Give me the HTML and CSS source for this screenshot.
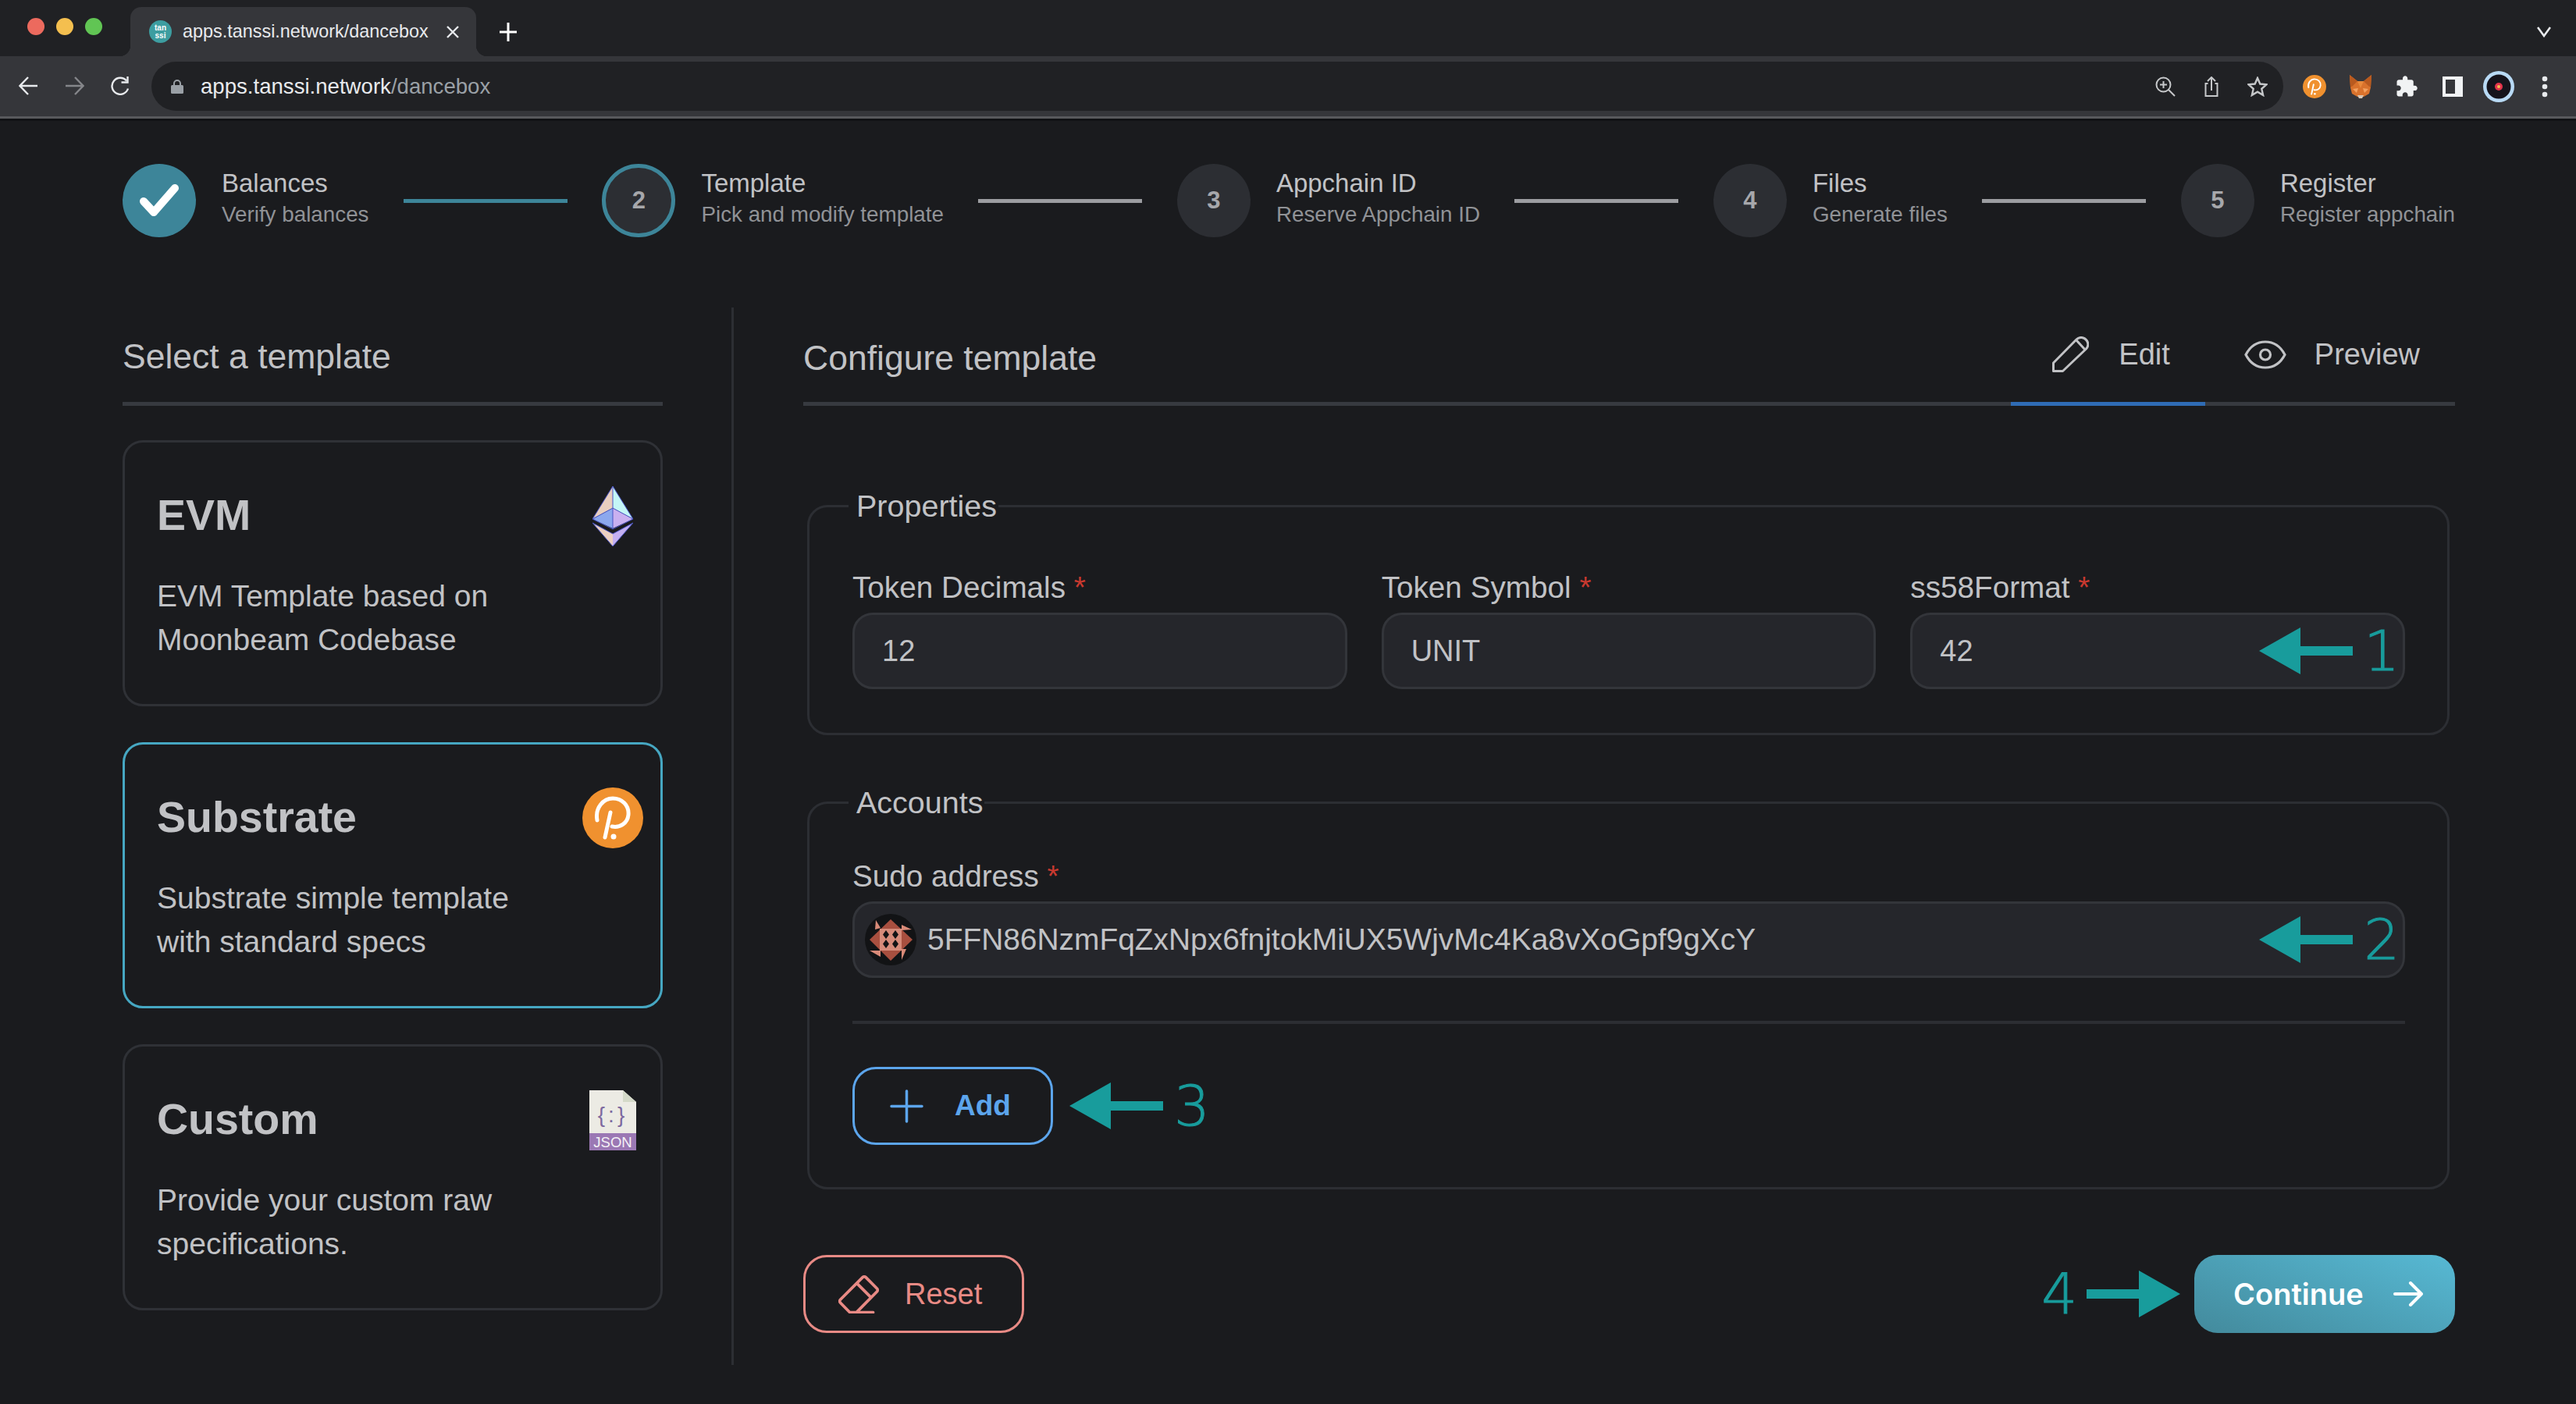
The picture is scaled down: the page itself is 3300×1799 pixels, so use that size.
FILE: index.html
```html
<!DOCTYPE html>
<html lang="en">
<head>
    <meta charset="UTF-8">
    <title>apps.tanssi.network/dancebox</title>
    <link rel="stylesheet" href="styles.css">
</head>
<body>

<svg class="defs" width="0" height="0">
    <symbol id="polkadot" viewBox="0 0 78 78">
        <circle cx="39" cy="39" r="39" fill="#f0912f"/>
        <path d="M19 42C16 26 27 14 39 14C51 14 60 23 59 35C58 46 48 52 38 50M36 32L29 64" fill="none" stroke="#fff" stroke-width="5" stroke-linecap="round"/>
        <circle cx="40" cy="63" r="3.5" fill="#fff"/>
    </symbol>
    <symbol id="arrow-left" viewBox="0 0 120 60">
        <polygon points="0,30 53,0 53,24 120,24 120,36 53,36 53,60" fill="#189c9c"/>
    </symbol>
    <symbol id="arrow-right" viewBox="0 0 120 60">
        <polygon points="120,30 67,0 67,24 0,24 0,36 67,36 67,60" fill="#189c9c"/>
    </symbol>
</svg>

<div class="tabstrip">
    <div class="lights">
        <span class="light red"></span>
        <span class="light yellow"></span>
        <span class="light green"></span>
    </div>
    <div class="tab">
        <svg class="favicon" viewBox="0 0 29 29">
            <circle cx="14.5" cy="14.5" r="14.5" fill="#3d9da0"/>
            <text x="14.5" y="13" text-anchor="middle" font-size="10" font-weight="700" fill="#fff">tan</text>
            <text x="14.5" y="23" text-anchor="middle" font-size="10" font-weight="700" fill="#fff">ssi</text>
        </svg>
        <span class="tab-title">apps.tanssi.network/dancebox</span>
        <svg class="tab-close" viewBox="0 0 16 16"><path d="M1 1L15 15M15 1L1 15" stroke="#e8eaed" stroke-width="2.4"/></svg>
    </div>
    <svg class="tab-new" viewBox="0 0 22 24"><path d="M11 0V24M0 12H22" stroke="#fff" stroke-width="3"/></svg>
    <svg class="tab-list" viewBox="0 0 18 14"><path d="M1 1L9 12L17 1" fill="none" stroke="#e8eaed" stroke-width="2.6"/></svg>
</div>

<div class="toolbar">
    <svg class="nav-icon" viewBox="0 0 25 24"><path d="M24 12H2M12 1L1.5 12L12 23" fill="none" stroke="#e8eaed" stroke-width="2.4"/></svg>
    <svg class="nav-icon dim" viewBox="0 0 25 24"><path d="M1 12H23M13 1L23.5 12L13 23" fill="none" stroke="#85868a" stroke-width="2.4"/></svg>
    <svg class="nav-icon" viewBox="0 0 25 24"><path d="M22 15.5A10.5 10.5 0 1 1 20 5.5M21.5 0V7.5H13.5" fill="none" stroke="#e8eaed" stroke-width="2.4"/></svg>
    <div class="omnibox">
        <svg class="lock" viewBox="0 0 16 18"><path d="M4 8V5a4 4 0 0 1 8 0V8" fill="none" stroke="#9aa0a6" stroke-width="2"/><rect y="7" width="16" height="11" rx="1.5" fill="#9aa0a6"/></svg>
        <span class="url">apps.tanssi.network<span class="url-path">/dancebox</span></span>
        <span class="omni-actions">
            <svg class="omni-icon" viewBox="0 0 26 26"><circle cx="10.5" cy="10.5" r="9" fill="none" stroke="#c6c8ca" stroke-width="2"/><path d="M17 17L25 25M10.5 6V15M6 10.5H15" fill="none" stroke="#c6c8ca" stroke-width="2"/></svg>
            <svg class="omni-icon" viewBox="0 0 26 26"><path d="M8.5 9H5.5V25H20.5V9H17.500M13 18V1M8 6L13 1L18 6" fill="none" stroke="#c6c8ca" stroke-width="2"/></svg>
            <svg class="omni-icon" viewBox="0 0 26 26"><polygon points="13,2 16.300,9.500 24.500,10.300 18.300,15.800 20.100,23.900 13,19.700 5.900,23.900 7.700,15.800 1.500,10.300 9.700,9.500" fill="none" stroke="#c6c8ca" stroke-width="2.400"/></svg>
        </span>
    </div>
    <div class="extensions">
        <svg class="ext"><use href="#polkadot"/></svg>
        <svg class="ext" viewBox="0 0 30 30">
            <polygon points="1,0 11,8 19,8 29,0 28,16 26,24 19,28 11,28 4,24 2,16" fill="#d9722c"/>
            <polygon points="1,0 11,8 5,14 2,16" fill="#b95a1f"/>
            <polygon points="29,0 19,8 25,14 28,16" fill="#b95a1f"/>
            <polygon points="11,8 19,8 15,17" fill="#e88a3c"/>
            <polygon points="5,18 12,17 10,23" fill="#f4a261"/>
            <polygon points="25,18 18,17 20,23" fill="#f4a261"/>
            <polygon points="11,26 19,26 17,30 13,30" fill="#d8c7b5"/>
        </svg>
        <svg class="ext" viewBox="0 0 24 24"><path d="M20.500 11H19V7c0-1.100-.9-2-2-2h-4V3.500C13 2.120 11.880 1 10.500 1S8 2.120 8 3.500V5H4c-1.100 0-1.990.9-1.990 2v3.800H3.500c1.490 0 2.700 1.210 2.700 2.700s-1.210 2.700-2.700 2.700H2V20c0 1.100.9 2 2 2h3.800v-1.500c0-1.490 1.210-2.700 2.700-2.700 1.490 0 2.700 1.210 2.700 2.700V22H17c1.100 0 2-.9 2-2v-4h1.500c1.380 0 2.500-1.120 2.500-2.500S21.880 11 20.500 11z" fill="#f1f3f4"/></svg>
        <svg class="ext" viewBox="0 0 30 30"><rect x="2" y="2" width="26" height="26" fill="#f1f3f4"/><rect x="6" y="6" width="12" height="18" fill="#35363a"/></svg>
        <svg class="ext avatar" viewBox="0 0 40 40">
            <circle cx="20" cy="20" r="20" fill="#b8daf5"/>
            <circle cx="20" cy="20" r="15.500" fill="#15141c"/>
            <circle cx="20" cy="20" r="5" fill="#e2344d"/>
            <circle cx="20" cy="20" r="2" fill="#f2c14e"/>
        </svg>
        <svg class="ext" viewBox="0 0 30 30"><circle cx="15" cy="5" r="3.300" fill="#e8eaed"/><circle cx="15" cy="15" r="3.300" fill="#e8eaed"/><circle cx="15" cy="25" r="3.300" fill="#e8eaed"/></svg>
    </div>
</div>

<div class="page">
    <div class="stepper">
        <div class="step">
            <div class="step-circle done">
                <svg class="check" viewBox="0 0 50 44"><path d="M5 23L18 37L45 6" fill="none" stroke="#fff" stroke-width="10" stroke-linejoin="round" stroke-linecap="round"/></svg>
            </div>
            <div class="step-text">
                <div class="step-title">Balances</div>
                <div class="step-sub">Verify balances</div>
            </div>
        </div>
        <div class="step-line active"></div>
        <div class="step">
            <div class="step-circle current">2</div>
            <div class="step-text">
                <div class="step-title">Template</div>
                <div class="step-sub">Pick and modify template</div>
            </div>
        </div>
        <div class="step-line"></div>
        <div class="step">
            <div class="step-circle">3</div>
            <div class="step-text">
                <div class="step-title">Appchain ID</div>
                <div class="step-sub">Reserve Appchain ID</div>
            </div>
        </div>
        <div class="step-line"></div>
        <div class="step">
            <div class="step-circle">4</div>
            <div class="step-text">
                <div class="step-title">Files</div>
                <div class="step-sub">Generate files</div>
            </div>
        </div>
        <div class="step-line"></div>
        <div class="step">
            <div class="step-circle">5</div>
            <div class="step-text">
                <div class="step-title">Register</div>
                <div class="step-sub">Register appchain</div>
            </div>
        </div>
    </div>

    <div class="main">
        <div class="left-col">
            <div class="col-head">Select a template</div>

            <div class="card">
                <div class="card-top">
                    <div class="card-title">EVM</div>
                    <div class="card-logo">
                        <svg class="eth" viewBox="0 0 52 77">
                            <polygon points="26,0 0,42 26,28" fill="#e9cfc0"/>
                            <polygon points="26,0 52,42 26,28" fill="#c4f6f6"/>
                            <polygon points="0,42 26,28 26,54" fill="#8ca8ee"/>
                            <polygon points="52,42 26,28 26,54" fill="#c9b0f0"/>
                            <polygon points="0,47 26,61 26,77" fill="#ecd0c2"/>
                            <polygon points="52,47 26,61 26,77" fill="#c4b0f2"/>
                            <path d="M26 0L0 42L26 55L52 42ZM0 42L26 28L52 42M26 0V55M0 47L26 77L52 47L26 61Z" fill="none" stroke="#4a55c4" stroke-width="1"/>
                        </svg>
                    </div>
                </div>
                <div class="card-desc">EVM Template based on<br>Moonbeam Codebase</div>
            </div>

            <div class="card selected">
                <div class="card-top">
                    <div class="card-title">Substrate</div>
                    <div class="card-logo"><svg class="dot-logo"><use href="#polkadot"/></svg></div>
                </div>
                <div class="card-desc">Substrate simple template<br>with standard specs</div>
            </div>

            <div class="card">
                <div class="card-top">
                    <div class="card-title">Custom</div>
                    <div class="card-logo">
                        <svg class="json" viewBox="0 0 60 77">
                            <polygon points="0,0 43,0 60,15 60,55 0,55" fill="#ecebe4"/>
                            <polygon points="43,0 60,15 43,15" fill="#d4d9c8"/>
                            <rect y="55" width="60" height="22" fill="#9b78b4"/>
                            <text x="30" y="41" text-anchor="middle" font-size="28" letter-spacing="4" fill="#7d69a0">{:}</text>
                            <text x="30" y="73" text-anchor="middle" font-size="18.500" fill="#f4f1f6">JSON</text>
                        </svg>
                    </div>
                </div>
                <div class="card-desc">Provide your custom raw<br>specifications.</div>
            </div>
        </div>

        <div class="col-divider"></div>

        <div class="right-col">
            <div class="col-head config-head">
                <span>Configure template</span>
                <div class="tabs">
                    <div class="config-tab active">
                        <svg class="edit-icon" viewBox="0 0 47 46"><path d="M1.500 44.500V34L31 4C35 0 41 1 44 5C47 9 46 13 43.500 16L13.500 44.500ZM31 5L42 17" fill="none" stroke="#c1c2c5" stroke-width="3" stroke-linejoin="round"/></svg>
                        Edit
                    </div>
                    <div class="config-tab">
                        <svg class="eye-icon" viewBox="0 0 54 37"><path d="M2 18.500C8 7 17 2 27 2C37 2 46 7 52 18.500C46 30 37 35 27 35C17 35 8 30 2 18.500Z" fill="none" stroke="#c1c2c5" stroke-width="3.200"/><circle cx="27" cy="18.500" r="6.500" fill="none" stroke="#c1c2c5" stroke-width="3.200"/></svg>
                        Preview
                    </div>
                </div>
            </div>

            <fieldset class="props">
                <legend>Properties</legend>
                <div class="props-grid">
                    <div>
                        <div class="field-label">Token Decimals <span class="req">*</span></div>
                        <div class="field-input">12</div>
                    </div>
                    <div>
                        <div class="field-label">Token Symbol <span class="req">*</span></div>
                        <div class="field-input">UNIT</div>
                    </div>
                    <div>
                        <div class="field-label">ss58Format <span class="req">*</span></div>
                        <div class="field-input">
                            42
                            <span class="note in-field">
                                <svg class="note-arrow"><use href="#arrow-left"/></svg>
                                <span class="note-num">1</span>
                            </span>
                        </div>
                    </div>
                </div>
            </fieldset>

            <fieldset class="accounts">
                <legend>Accounts</legend>
                <div class="field-label">Sudo address <span class="req">*</span></div>
                <div class="field-input address">
                    <svg class="identicon" viewBox="0 0 66 66">
                        <circle cx="33" cy="33" r="33" fill="#121315"/>
                        <polygon points="33,7 61,33 33,60 6,33" fill="#a84f3f"/>
                        <rect x="19" y="19" width="28" height="28" fill="#d68b7a"/>
                        <polygon points="27,21 31,26.500 27,32 23,26.500" fill="#121315"/>
                        <polygon points="39,21 43,26.500 39,32 35,26.500" fill="#121315"/>
                        <polygon points="27,33 31,38.500 27,44 23,38.500" fill="#121315"/>
                        <polygon points="39,33 43,38.500 39,44 35,38.500" fill="#121315"/>
                        <polygon points="14,8 20,18 13,20" fill="#d98a78"/>
                        <polygon points="47,14 60,20 47,21" fill="#d98a78"/>
                        <polygon points="6,47 20,47 20,55" fill="#d98a78"/>
                        <polygon points="47,45 53,45 47,59" fill="#d98a78"/>
                    </svg>
                    5FFN86NzmFqZxNpx6fnjtokMiUX5WjvMc4Ka8vXoGpf9gXcY
                    <span class="note in-field">
                        <svg class="note-arrow"><use href="#arrow-left"/></svg>
                        <span class="note-num">2</span>
                    </span>
                </div>
                <div class="accounts-rule"></div>
                <div class="add-row">
                    <div class="btn add-btn">
                        <svg class="plus" viewBox="0 0 43 43"><path d="M21.500 2V41M2 21.500H41" stroke="#5ca5ec" stroke-width="3.500" stroke-linecap="round"/></svg>
                        Add
                    </div>
                    <span class="note">
                        <svg class="note-arrow"><use href="#arrow-left"/></svg>
                        <span class="note-num">3</span>
                    </span>
                </div>
            </fieldset>

            <div class="actions">
                <div class="btn reset-btn">
                    <svg class="eraser" viewBox="3.500 3 18 17.500"><path d="M19 20H8.500L4.290 15.700a1 1 0 0 1 0-1.410l10-10a1 1 0 0 1 1.410 0l5 5a1 1 0 0 1 0 1.410L11.500 20M18 13.300L11.700 7" fill="none" stroke="#e88a85" stroke-width="1.300" stroke-linecap="round" stroke-linejoin="round"/></svg>
                    Reset
                </div>
                <div class="continue-wrap">
                    <span class="note">
                        <span class="note-num">4</span>
                        <svg class="note-arrow"><use href="#arrow-right"/></svg>
                    </span>
                    <div class="btn continue-btn">
                        Continue
                        <svg class="go-icon" viewBox="0 0 38 32"><path d="M2 16H36M22 2L36 16L22 30" fill="none" stroke="#fff" stroke-width="4" stroke-linecap="round" stroke-linejoin="round"/></svg>
                    </div>
                </div>
            </div>
        </div>
    </div>
</div>

</body>
</html>
```

FILE: styles.css
```css
html, body {
    margin: 0;
    background-color: #1a1b1e;
}
body {
    font-family: "Liberation Sans", Arial, sans-serif;
    color: #c1c2c5;
    overflow: hidden;
}
.defs {
    position: absolute;
}
svg text {
    font-family: "Liberation Sans", Arial, sans-serif;
}

/* browser frame */
.tabstrip {
    height: 72px;
    background-color: #202124;
    display: flex;
    align-items: flex-end;
}
.lights {
    display: flex;
    gap: 15px;
    align-self: flex-start;
    margin: 23px 36px 0 35px;
}
.light {
    width: 22px;
    height: 22px;
    border-radius: 50%;
}
.red { background-color: #ec6a5e; }
.yellow { background-color: #f4bf4f; }
.green { background-color: #61c554; }
.tab {
    position: relative;
    width: 443px;
    height: 63px;
    box-sizing: border-box;
    padding: 0 22px 0 24px;
    background-color: #35363a;
    border-radius: 14px 14px 0 0;
    display: flex;
    align-items: center;
    color: #e8eaed;
    font-size: 23.400px;
}
.tab::before, .tab::after {
    content: "";
    position: absolute;
    bottom: 0;
    width: 14px;
    height: 14px;
}
.tab::before {
    left: -14px;
    background: radial-gradient(circle at 0 0, transparent 14px, #35363a 14.5px);
}
.tab::after {
    right: -14px;
    background: radial-gradient(circle at 100% 0, transparent 14px, #35363a 14.5px);
}
.favicon {
    width: 29px;
    height: 29px;
    margin-right: 14px;
    flex: none;
}
.tab-title {
    white-space: nowrap;
}
.tab-close {
    width: 16px;
    height: 16px;
    margin-left: auto;
}
.tab-new {
    width: 22px;
    height: 24px;
    align-self: center;
    margin: 10px 0 0 30px;
}
.tab-list {
    width: 18px;
    height: 14px;
    align-self: center;
    margin: 10px 32px 0 auto;
}
.toolbar {
    height: 80px;
    box-sizing: border-box;
    padding: 7px 0 7px 24px;
    background-color: #35363a;
    border-bottom: 3px solid #58595c;
    box-shadow: 0 3px 0 #111215;
    display: flex;
    align-items: flex-start;
    position: relative;
}
.nav-icon {
    width: 25px;
    height: 24px;
    margin: 19px 34px 0 0;
    flex: none;
}
.omnibox {
    width: 2731px;
    height: 63px;
    margin-left: -7px;
    box-sizing: border-box;
    padding: 0 20px 0 25px;
    background-color: #202124;
    border-radius: 32px;
    display: flex;
    align-items: center;
    flex: none;
}
.lock {
    width: 16px;
    height: 18px;
    margin-right: 22px;
}
.url {
    color: #e8eaed;
    font-size: 27.600px;
}
.url-path {
    color: #9aa0a6;
}
.omni-actions {
    margin-left: auto;
    display: flex;
    gap: 33px;
}
.omni-icon {
    width: 26px;
    height: 26px;
}
.extensions {
    display: flex;
    align-items: center;
    gap: 29px;
    height: 63px;
    margin-left: 25px;
}
.ext {
    width: 30px;
    height: 30px;
}
.ext.avatar {
    width: 40px;
    height: 40px;
    margin: 0 -5px;
}

/* page */
.page {
    padding: 58px 155px 0 157px;
}
.stepper {
    display: flex;
    align-items: center;
    justify-content: space-between;
    margin-bottom: 90px;
}
.step {
    display: flex;
    align-items: center;
    gap: 33px;
}
.step-circle {
    width: 94px;
    height: 94px;
    box-sizing: border-box;
    border-radius: 50%;
    background-color: #2c2e33;
    display: flex;
    align-items: center;
    justify-content: center;
    font-size: 31px;
    font-weight: bold;
    color: #a6a7ab;
}
.step-circle.done {
    background-color: #3d8599;
}
.step-circle.current {
    border: 5px solid #3d8599;
}
.check {
    width: 50px;
    height: 44px;
}
.step-title {
    font-size: 33px;
    line-height: 36px;
}
.step-sub {
    font-size: 27.800px;
    line-height: 44px;
    color: #909296;
}
.step-line {
    width: 210px;
    height: 5px;
    background-color: #9c9da1;
}
.step-line.active {
    background-color: #3d8599;
}
.main {
    display: flex;
}
.left-col {
    width: 692px;
    flex: none;
}
.col-head {
    height: 121px;
    box-sizing: content-box;
    padding-top: 0;
    border-bottom: 5px solid #373a40;
    font-size: 44.500px;
    line-height: 50px;
}
.left-col .col-head {
    height: 83px;
    padding-top: 38px;
}
.col-divider {
    width: 3px;
    margin: 0 89px 0 88px;
    background-color: #2c2e33;
    flex: none;
}
.right-col {
    flex: 1;
    padding-bottom: 41px;
}

/* template cards */
.card {
    height: 341px;
    box-sizing: border-box;
    margin-top: 46px;
    padding: 55px 22px 0 41px;
    border: 3px solid #2f3136;
    border-radius: 26px;
}
.left-col .col-head + .card {
    margin-top: 44px;
}
.card.selected {
    border-color: #46a7c2;
}
.card-top {
    display: flex;
    justify-content: space-between;
    align-items: center;
    height: 78px;
    margin-bottom: 36px;
}
.card-title {
    font-size: 55.500px;
    font-weight: bold;
    padding-bottom: 3px;
}
.card-logo {
    width: 78px;
    height: 78px;
    display: flex;
    align-items: center;
    justify-content: center;
}
.eth {
    width: 52px;
    height: 77px;
}
.dot-logo {
    width: 78px;
    height: 78px;
}
.json {
    width: 60px;
    height: 77px;
}
.card-desc {
    font-size: 39px;
    line-height: 56px;
}

/* configure header */
.config-head {
    display: flex;
    height: 81px;
    padding-top: 40px;
}
.tabs {
    display: flex;
    margin-left: auto;
    margin-bottom: -5px;
    align-self: flex-end;
}
.config-tab {
    display: flex;
    align-items: center;
    height: 46px;
    padding: 0 45px 38px 50px;
    border-bottom: 5px solid transparent;
    font-size: 38px;
}
.config-tab.active {
    padding-left: 53px;
    border-bottom-color: #2f6cb5;
}
.edit-icon {
    width: 47px;
    height: 46px;
    margin-right: 38px;
}
.eye-icon {
    width: 54px;
    height: 37px;
    margin-right: 36px;
}

/* fieldsets */
fieldset {
    margin: 0 7px 0 5px;
    padding: 0 54px 54px 55px;
    border: 3px solid #2c2e33;
    border-radius: 26px;
    min-width: 0;
}
legend {
    margin-left: -5px;
    padding: 0 2px 0 10px;
    font-size: 39.500px;
    line-height: 46px;
}
.props {
    margin-top: 105px;
    padding-top: 59px;
    padding-bottom: 56px;
}
.accounts {
    margin-top: 63px;
    padding-top: 49px;
}
.props-grid {
    display: grid;
    grid-template-columns: repeat(3, 1fr);
    gap: 44px;
}
.field-label {
    font-size: 38.700px;
    line-height: 46px;
    margin-bottom: 9px;
}
.req {
    color: #c9392f;
}
.field-input {
    height: 98px;
    box-sizing: border-box;
    padding: 0 4px 0 35px;
    background-color: #25262b;
    border: 3px solid #33353a;
    border-radius: 26px;
    display: flex;
    align-items: center;
    font-size: 38px;
}
.field-input.address {
    padding-left: 13px;
    font-size: 38.900px;
}
.identicon {
    width: 66px;
    height: 66px;
    margin-right: 14px;
    flex: none;
}
.accounts-rule {
    height: 4px;
    margin: 55px 0 55px;
    background-color: #2c2e33;
}
.add-row {
    display: flex;
    align-items: center;
}

/* annotation arrows */
.note {
    display: inline-flex;
    align-items: center;
    color: #189c9c;
}
.note.in-field {
    margin-left: auto;
}
.note-arrow {
    width: 120px;
    height: 60px;
    flex: none;
}
.note-num {
    font-family: "DejaVu Sans", sans-serif;
    font-weight: 200;
    font-size: 72px;
    line-height: 60px;
    margin-left: 14px;
    -webkit-text-stroke: 1px #189c9c;
}
.add-row .note {
    margin-left: 21px;
}
.continue-wrap .note-num {
    margin: 0 12px 0 0;
}

/* buttons */
.btn {
    display: flex;
    align-items: center;
    box-sizing: border-box;
    height: 100px;
    border-radius: 30px;
    font-size: 38px;
}
.add-btn {
    width: 257px;
    padding-left: 45px;
    border: 3px solid #5ca5ec;
    color: #5ca5ec;
    font-size: 37px;
    font-weight: bold;
}
.plus {
    width: 43px;
    height: 43px;
    margin-right: 40px;
}
.actions {
    display: flex;
    justify-content: space-between;
    align-items: center;
    margin-top: 84px;
}
.reset-btn {
    width: 283px;
    padding-left: 42px;
    border: 3px solid #e88a85;
    color: #e88a85;
}
.eraser {
    width: 52px;
    height: 50px;
    margin-right: 33px;
}
.continue-wrap {
    display: flex;
    align-items: center;
    gap: 18px;
}
.continue-btn {
    width: 334px;
    padding-left: 50px;
    background: linear-gradient(20deg, #438a9c, #57b9d4);
    color: #fff;
    font-family: Inter, "Liberation Sans", sans-serif;
    font-weight: 600;
    font-size: 38px;
}
.go-icon {
    width: 38px;
    height: 32px;
    margin-left: 38px;
}
```
